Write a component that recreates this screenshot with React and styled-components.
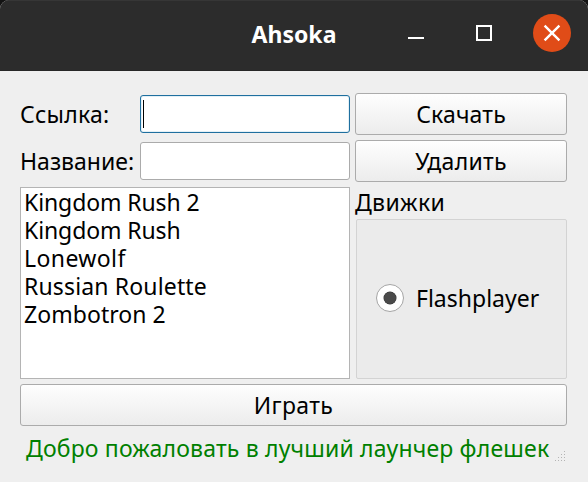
import React from "react";
import styled, { createGlobalStyle } from "styled-components";

const GlobalStyle = createGlobalStyle`
  * { box-sizing: border-box; }
  body { margin: 0; background: #131313; }
`;

const Window = styled.main`
  display: flex;
  flex-direction: column;
  width: 588px;
  height: 482px;
  overflow: hidden;
  border-radius: 9px 9px 0 0;
  background: #efefef;
  color: #000;
  font: 23px/28px "Noto Sans", sans-serif;
  white-space: nowrap;
`;

const TitleBar = styled.header`
  display: grid;
  grid-template-columns: 1fr auto 1fr;
  align-items: center;
  height: 71px;
  flex: none;
  padding-bottom: 5px;
  background: #2c2c2c;
  border-bottom: 1px solid #272727;
  border-top: 1px solid #363636;
  color: #fff;
`;

const Title = styled.h1`
  grid-column: 2;
  margin: 2px 0 0;
  font-size: 23px;
  line-height: 28px;
  font-weight: 700;
`;

const WindowControls = styled.div`
  display: flex;
  justify-content: flex-end;
  gap: 30px;
  padding-right: 17px;
`;

const ControlButton = styled.button`
  width: 38px;
  height: 38px;
  padding: 0;
  border: 0;
  border-radius: 50%;
  background: ${(p) => (p.$close ? "#e04c18" : "transparent")};

  svg {
    display: block;
    fill: none;
    stroke: #fff;
    stroke-width: ${(p) => (p.$close ? 2.4 : 2)};
  }
`;

const Form = styled.section`
  display: grid;
  grid-template-columns: 115px 210px 212px;
  grid-template-rows: 42px 42px 192px 42px;
  gap: 5px;
  padding: 22px 20px 0;
`;

const Label = styled.label`
  align-self: center;
  letter-spacing: ${(p) => p.$spacing || 0}px;
`;

const Field = styled.div`
  align-self: center;
  height: 38px;
  padding: 4px 2px;
  border: 1px solid ${(p) => (p.$focused ? "#1f6f9f" : "#ababab")};
  border-radius: 3px;
  background: #fff;
  box-shadow: ${(p) => (p.$focused ? "inset 0 0 0 1px #e3f0f6" : "none")};
`;

const Caret = styled.span`
  display: block;
  width: 1px;
  height: 28px;
  background: #000;
`;

const PushButton = styled.button`
  grid-column: ${(p) => (p.$wide ? "1 / -1" : "auto")};
  padding: 0;
  border: 1px solid #ababab;
  border-radius: 3px;
  background: linear-gradient(#fefefe, #ececec);
  color: inherit;
  font: inherit;
  letter-spacing: ${(p) => p.$spacing || 0}px;
`;

const GameList = styled.ul`
  grid-column: span 2;
  margin: 0;
  padding: 0 3px;
  border: 1px solid #b4b4b4;
  background: #fff;
  list-style: none;
`;

const GameItem = styled.li`
  height: 28px;
  letter-spacing: ${(p) => p.$spacing || 0}px;
`;

const Engines = styled.div`
  display: flex;
  flex-direction: column;
`;

const EnginesTitle = styled.div`
  height: 32px;
  padding-top: 1px;
  letter-spacing: 0.35px;
`;

const EnginesBox = styled.div`
  display: flex;
  align-items: center;
  flex: 1;
  gap: 12px;
  margin-left: 1px;
  padding: 0 0 2px 19px;
  border: 1px solid #d3d3d3;
  border-radius: 2px;
  background: #ebebeb;
`;

const Radio = styled.span`
  display: grid;
  place-items: center;
  width: 28px;
  height: 28px;
  border: 1px solid #a5a5a5;
  border-radius: 50%;
  background: #fff;

  &::after {
    content: "";
    width: 12px;
    height: 12px;
    border-radius: 50%;
    background: #4a4a4a;
    box-shadow: 0 0 0 0.5px #333;
  }
`;

const StatusBar = styled.footer`
  display: flex;
  align-items: flex-start;
  justify-content: space-between;
  padding: 8px 23px 0 26px;
  color: #008000;
  letter-spacing: 0.18px;
`;

const Grip = styled.svg`
  display: block;
  margin-top: 17px;
  fill: #b4b4b4;
`;

const GAMES = [
  { name: "Kingdom Rush 2", spacing: -0.1 },
  { name: "Kingdom Rush", spacing: -0.1 },
  { name: "Lonewolf", spacing: 0.4 },
  { name: "Russian Roulette", spacing: 0.15 },
  { name: "Zombotron 2", spacing: 0.05 },
];

const GRIP_DOTS = [
  [9, 0],
  [6, 3], [9, 3],
  [3, 6], [6, 6], [9, 6],
  [0, 9], [3, 9], [6, 9], [9, 9],
];

export default function App() {
  return (
    <>
      <GlobalStyle />
      <Window>
        <TitleBar>
          <Title>Ahsoka</Title>
          <WindowControls>
            <ControlButton aria-label="Minimize">
              <svg width="38" height="38"><path d="M11 24h16" /></svg>
            </ControlButton>
            <ControlButton aria-label="Maximize">
              <svg width="38" height="38"><rect x="12" y="12" width="14" height="14" /></svg>
            </ControlButton>
            <ControlButton $close aria-label="Close">
              <svg width="38" height="38"><path d="M11.6 11.6l14.8 14.8M26.4 11.6l-14.8 14.8" /></svg>
            </ControlButton>
          </WindowControls>
        </TitleBar>
        <Form>
          <Label $spacing={0.25}>Ссылка:</Label>
          <Field $focused><Caret /></Field>
          <PushButton $spacing={0.16}>Скачать</PushButton>
          <Label>Название:</Label>
          <Field />
          <PushButton $spacing={0.3}>Удалить</PushButton>
          <GameList>
            {GAMES.map((g) => (
              <GameItem key={g.name} $spacing={g.spacing}>{g.name}</GameItem>
            ))}
          </GameList>
          <Engines>
            <EnginesTitle>Движки</EnginesTitle>
            <EnginesBox>
              <Radio />
              <Label>Flashplayer</Label>
            </EnginesBox>
          </Engines>
          <PushButton $wide $spacing={0.35}>Играть</PushButton>
        </Form>
        <StatusBar>
          Добро пожаловать в лучший лаунчер флешек
          <Grip width="10" height="10">
            {GRIP_DOTS.map(([x, y]) => (
              <rect key={`${x}-${y}`} x={x} y={y} width="1" height="1" />
            ))}
          </Grip>
        </StatusBar>
      </Window>
    </>
  );
}
